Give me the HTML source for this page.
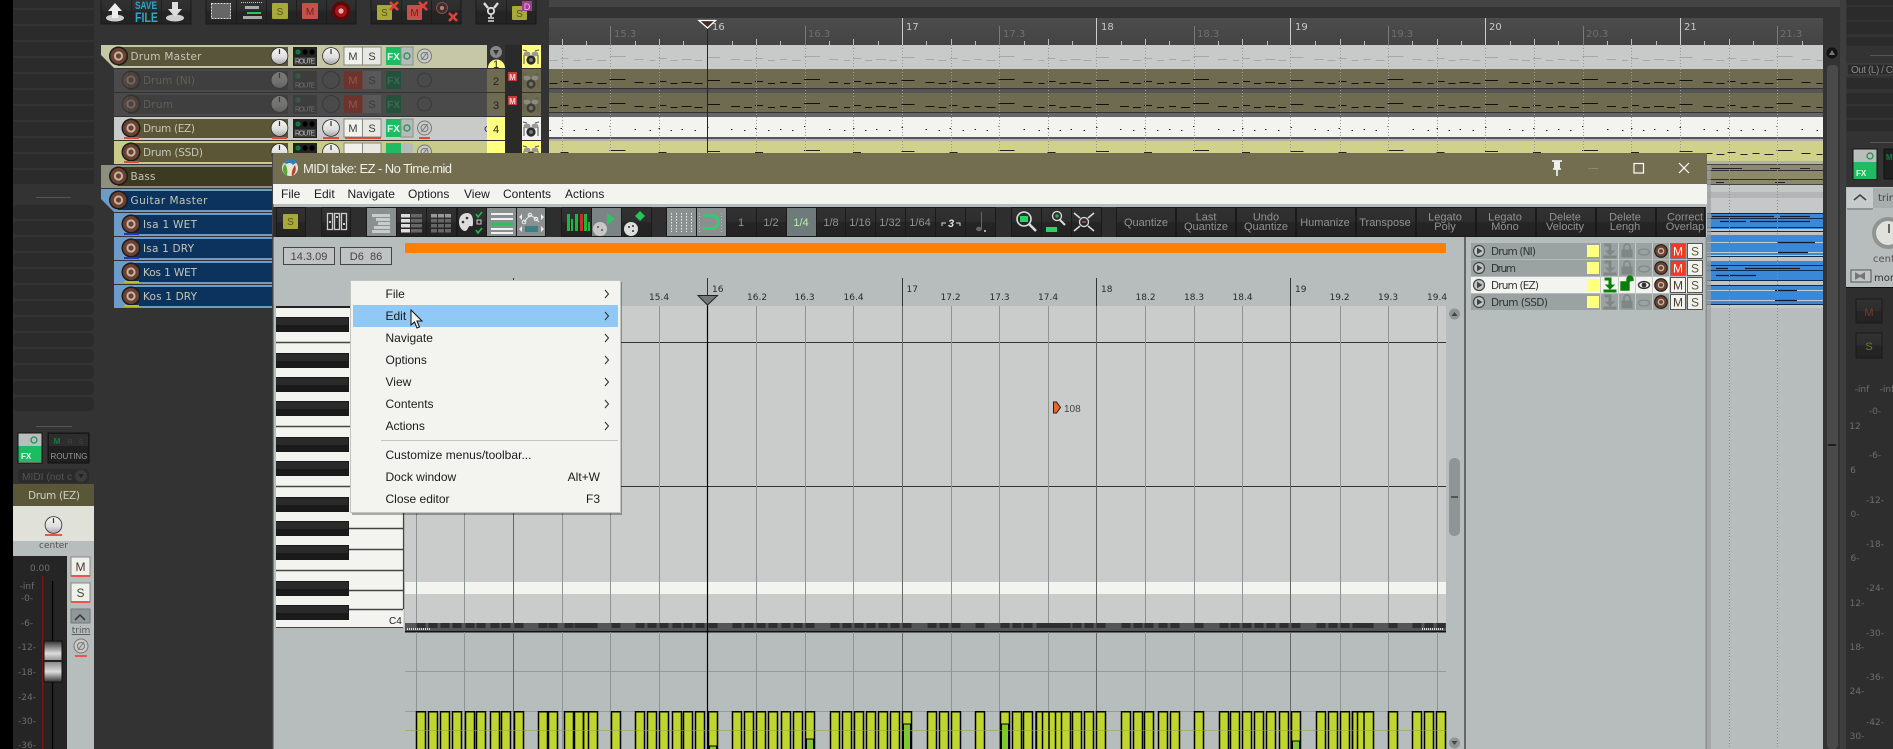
<!DOCTYPE html>
<html><head><meta charset="utf-8"><title>MIDI take</title>
<style>
html,body{margin:0;padding:0;background:#333;width:1893px;height:749px;overflow:hidden}
svg{display:block;position:absolute;left:0;top:0}
text{font-family:"Liberation Sans",sans-serif;white-space:pre}
.d{font-family:"DejaVu Sans",sans-serif}
.n{font-family:"DejaVu Sans",sans-serif;font-size:10.5px;fill:#c6c6b8}
.m{font-size:12px;fill:#1a1a1a}
.t{font-size:11px;fill:#929292;text-anchor:middle}
.r{font-family:"DejaVu Sans",sans-serif;font-size:9px;fill:#2a2a2a}
.s{font-family:"DejaVu Sans",sans-serif;font-size:9px;fill:#6e6e6e;text-anchor:middle}
.ms{font-size:11px;fill:#3a3a3a;text-anchor:middle}
.ro{font-size:7px;fill:#bbb;text-anchor:middle}
</style></head><body>
<svg width="1893" height="749" viewBox="0 0 1893 749" xmlns="http://www.w3.org/2000/svg">
<defs>
<linearGradient id="kg" x1="0" y1="0" x2="0" y2="1"><stop offset="0" stop-color="#f4f4f0"/><stop offset=".6" stop-color="#dedede"/><stop offset="1" stop-color="#a8a8a8"/></linearGradient>
<linearGradient id="bg" x1="0" y1="0" x2="0" y2="1"><stop offset="0" stop-color="#323232"/><stop offset=".5" stop-color="#2d2d2d"/><stop offset=".5" stop-color="#252525"/><stop offset="1" stop-color="#232323"/></linearGradient>
<linearGradient id="rg" x1="0" y1="0" x2="0" y2="1"><stop offset="0" stop-color="#4c4c4c"/><stop offset="1" stop-color="#444"/></linearGradient>
<linearGradient id="fg" x1="0" y1="0" x2="0" y2="1"><stop offset="0" stop-color="#333"/><stop offset=".3" stop-color="#ddd"/><stop offset=".5" stop-color="#888"/><stop offset=".75" stop-color="#ddd"/><stop offset="1" stop-color="#333"/></linearGradient>
<clipPath id="arr"><rect x="549" y="18" width="1274" height="143"/></clipPath>
<clipPath id="cc"><rect x="405" y="623" width="1041" height="5"/></clipPath>
<g id="rec"><circle r="9.5" fill="#1b1b1b"/><circle r="8" fill="#6b4232"/><circle r="4.6" fill="#c9b3a3"/><circle r="2.6" fill="#6b4232"/></g>
<g id="knob"><circle r="8.8" fill="#2a2a2a"/><circle r="8" fill="url(#kg)"/><path d="M0-7V-2" stroke="#333" stroke-width="1.2"/></g>
<g id="phase"><circle r="7" fill="#c9cbc6" stroke="#777"/><circle r="3.5" fill="none" stroke="#777"/><path d="M-3 4L3-4" stroke="#777"/></g>
<g id="drum"><path d="M-8-6l4 1M8-6l-4 1M-7-1V8M7-1V8" stroke="#555" fill="none"/><ellipse cx="-4" cy="-2" rx="3.4" ry="2.4" fill="#999"/><ellipse cx="4" cy="-2" rx="3.4" ry="2.4" fill="#999"/><circle cy="4" r="4.6" fill="#2a2a2a"/><circle cy="4" r="2" fill="#777"/></g>
<path id="P" fill="none" d="M0 0h13M24 2h9M37 3h8M48 1h8M61 3h7M73 2h7M85 3h9M97-1h16M122 2h9M137 3h6M146 1h8M158 3h7M169 2h10M182 3h8"/>
<g id="bars6"><use href="#P" x="512.5"/><use href="#P" x="707"/><use href="#P" x="901.5"/><use href="#P" x="1096"/><use href="#P" x="1290.5"/><use href="#P" x="1485"/><use href="#P" x="1679.5"/></g>
<path id="V" fill="none" d="M421 711V749M433 711V749M445 711V749M457 711V749M470 711V749M481 711V749M495 711V749M506 711V749M519 711V749M543 711V749M553 711V749M569 711V749M579 711V749M588 711V749M593 711V749M616 711V749M640 711V749M652 711V749M664 711V749M677 711V749M688 711V749M700 711V749M713 711V749M737 711V749M749 711V749M761 711V749M773 711V749M786 711V749M798 711V749M810 711V749M835 711V749M847 711V749M859 711V749M871 711V749M883 711V749M895 711V749M907 711V749M932 711V749M944 711V749M956 711V749M980 711V749M1005 711V749M1017 711V749M1028 711V749M1041 711V749M1047 711V749M1054 711V749M1060 711V749M1066 711V749M1077 711V749M1089 711V749M1101 711V749M1126 711V749M1138 711V749M1149 711V749M1163 711V749M1175 711V749M1199 711V749M1224 711V749M1235 711V749M1247 711V749M1259 711V749M1271 711V749M1284 711V749M1296 711V749M1321 711V749M1333 711V749M1345 711V749M1357 711V749M1362 711V749M1369 711V749M1393 711V749M1417 711V749M1429 711V749M1441 711V749"/>
<g id="arrowi"><path d="M-5-7h6v7h3l-4 4-4-4h3v-5h-4z"/><rect x="-6" y="5" width="12" height="2"/></g>
<g id="lock"><rect x="-5" y="-1" width="10" height="7"/><path d="M-3-1v-3a3 3 0 0 1 6 0v3" fill="none" stroke-width="1.6"/></g>
<g id="play"><circle r="5.5" fill="#c0c5c5" stroke="#444" stroke-width="1.2"/><path d="M-2-3.2L3.5 0-2 3.2z" fill="#444"/></g>
</defs>

<rect width="1893" height="749" fill="#333"/>
<rect width="13" height="749" fill="#000"/>

<!-- left slot rows -->
<g fill="#2b2b2b">
<rect x="13" y="0" width="81" height="8"/><rect x="13" y="10" width="81" height="14"/><rect x="13" y="26" width="81" height="14"/><rect x="13" y="42" width="81" height="14"/><rect x="13" y="58" width="81" height="14"/><rect x="13" y="74" width="81" height="14"/><rect x="13" y="90" width="81" height="14"/><rect x="13" y="106" width="81" height="14"/><rect x="13" y="122" width="81" height="14"/><rect x="13" y="138" width="81" height="14"/><rect x="13" y="154" width="81" height="14"/><rect x="13" y="170" width="81" height="14"/>
<rect x="13" y="205" width="81" height="14" rx="5"/><rect x="13" y="221" width="81" height="14" rx="5"/><rect x="13" y="237" width="81" height="14" rx="5"/><rect x="13" y="253" width="81" height="14" rx="5"/><rect x="13" y="269" width="81" height="14" rx="5"/><rect x="13" y="285" width="81" height="14" rx="5"/><rect x="13" y="301" width="81" height="14" rx="5"/><rect x="13" y="317" width="81" height="14" rx="5"/><rect x="13" y="333" width="81" height="14" rx="5"/><rect x="13" y="349" width="81" height="14" rx="5"/><rect x="13" y="365" width="81" height="14" rx="5"/><rect x="13" y="381" width="81" height="14" rx="5"/><rect x="13" y="397" width="81" height="14" rx="5"/>
</g>
<rect x="36" y="197" width="35" height="1" fill="#555"/><rect x="36" y="426" width="36" height="1" fill="#555"/>

<!-- left mixer strip -->
<rect x="18" y="433" width="24" height="30" fill="#b9bebc" stroke="#111"/><rect x="18.5" y="446" width="23" height="16" fill="#1fbb63"/>
<circle cx="34" cy="440" r="3" fill="none" stroke="#1a8a4a" stroke-width="1.2"/>
<text x="21" y="459" font-size="8" font-weight="bold" fill="#e8ffe8">FX</text>
<rect x="48" y="433" width="41" height="30" fill="#1f1f1f" stroke="#111"/><rect x="49" y="434" width="39" height="12" fill="#2d2d2d"/>
<text x="57" y="444" font-size="8" font-weight="bold" fill="#0e7f40" text-anchor="middle">M</text><text x="70" y="444" font-size="7" fill="#444" text-anchor="middle">R</text><text x="81" y="444" font-size="7" fill="#444" text-anchor="middle">S</text>
<text x="69" y="459" class="ro" style="font-size:8px;fill:#999">ROUTING</text>
<rect x="18" y="469" width="71" height="14" rx="4" fill="#2b2b2b"/><text x="22" y="480" font-size="10" fill="#555" textLength="50">MIDI (not c</text><circle cx="81" cy="476" r="6" fill="#3c3c3c"/><path d="M78 474h6l-3 4z" fill="#222"/>
<rect x="13" y="484" width="81" height="22" fill="#5a5738"/><text x="54" y="499" class="d" font-size="10.5" fill="#cfcfc2" text-anchor="middle" textLength="52">Drum (EZ)</text>
<rect x="13" y="506" width="81" height="35" fill="#e0e2da"/><rect x="13" y="541" width="81" height="15" fill="#b7bcbc"/>
<use href="#knob" x="53.5" y="525"/><rect x="45" y="534" width="17" height="2" fill="#e8584a"/>
<text x="53.5" y="548" class="d" font-size="9" fill="#555" text-anchor="middle">center</text>
<rect x="13" y="556" width="54" height="193" fill="#252525"/><rect x="67" y="556" width="27" height="193" fill="#b7bcbc"/>
<text x="40" y="571" class="s">0.00</text>
<text x="27" y="589" class="s">-inf</text><text x="27" y="601" class="s">-0-</text><text x="27" y="626" class="s">-6-</text><text x="27" y="650" class="s">-12-</text><text x="27" y="675" class="s">-18-</text><text x="27" y="700" class="s">-24-</text><text x="27" y="724" class="s">-30-</text><text x="27" y="748" class="s">-36-</text>
<rect x="42" y="576" width="1.5" height="173" fill="#7e1414"/><rect x="52" y="581" width="1.2" height="168" fill="#000"/>
<rect x="44" y="641" width="18" height="41" fill="url(#fg)" stroke="#111"/><rect x="44" y="660" width="18" height="2" fill="#222"/>
<rect x="71" y="557" width="19" height="19" fill="#f0f0ea" stroke="#888"/><text x="80.5" y="571" font-size="12" fill="#4a3a30" text-anchor="middle">M</text><rect x="71" y="575" width="19" height="2" fill="#e8584a"/>
<rect x="71" y="583" width="19" height="19" fill="#f0f0ea" stroke="#888"/><text x="80.5" y="597" font-size="12" fill="#3a4a30" text-anchor="middle">S</text><rect x="71" y="601" width="19" height="2" fill="#e8584a"/>
<rect x="71" y="609" width="19" height="14" fill="#90989a" stroke="#777"/><path d="M75 620l5-5 5 5" fill="none" stroke="#333" stroke-width="1.5"/>
<text x="81" y="633" class="d" font-size="9" fill="#555" text-anchor="middle" text-decoration="underline">trim</text>
<use href="#phase" x="81" y="646"/><rect x="75" y="655" width="12" height="2" fill="#e8584a"/>

<!-- top toolbar -->
<g fill="url(#bg)" stroke="#1a1a1a"><rect x="101" y="-3" width="90" height="27"/><rect x="206" y="-3" width="150" height="27"/><rect x="371" y="-3" width="90" height="27"/><rect x="476" y="-3" width="60" height="27"/></g>
<g stroke="#1e1e1e"><path d="M131.5 0v24M161.5 0v24M236.5 0v24M266.5 0v24M296.5 0v24M326.5 0v24M401.500 0v24M431.5 0v24M506.5 0v24"/></g>
<ellipse cx="115" cy="18" rx="9" ry="3.5" fill="#cfcfcf"/><path d="M115 3l7 8h-4v7h-6v-7h-4z" fill="#eee"/>
<text x="135" y="9" font-size="11" font-weight="bold" fill="#2aa7c9" textLength="22" lengthAdjust="spacingAndGlyphs">SAVE</text>
<text x="135" y="22" font-size="14" font-weight="bold" fill="#2aa7c9" textLength="23" lengthAdjust="spacingAndGlyphs">FILE</text>
<ellipse cx="175" cy="18" rx="9" ry="3.5" fill="#cfcfcf"/><path d="M172 2h6v7h4l-7 8-7-8h4z" fill="#ddd"/>
<rect x="211.5" y="3.5" width="19" height="15" fill="#666" stroke="#ddd" stroke-dasharray="2 1"/>
<path d="M241 2.5h22" stroke="#ccc" stroke-dasharray="1 1"/><rect x="245" y="6" width="14" height="3" fill="#aaa"/><rect x="247" y="12" width="14" height="2" fill="#2ec25c"/><rect x="243" y="16" width="19" height="3" fill="#aaa"/>
<rect x="272" y="3" width="16" height="16" rx="1" fill="#a9a83a"/><text x="280" y="15" font-size="10" fill="#55551e" text-anchor="middle">S</text>
<rect x="302" y="3" width="16" height="16" rx="1" fill="#c4524a"/><text x="310" y="15" font-size="10" fill="#6e1f1a" text-anchor="middle">M</text>
<circle cx="341" cy="11" r="9.5" fill="#5c0808"/><circle cx="341" cy="11" r="6" fill="#a81414"/><circle cx="341" cy="11" r="2.6" fill="#e0b0b0"/>
<rect x="377" y="5" width="15" height="15" rx="1" fill="#a9a83a"/><text x="384.5" y="16" font-size="10" fill="#55551e" text-anchor="middle">S</text>
<path d="M390 2l8 8M398 2l-8 8" stroke="#e0433a" stroke-width="2.6"/>
<rect x="407" y="5" width="15" height="15" rx="1" fill="#c4524a"/><text x="414.5" y="16" font-size="10" fill="#6e1f1a" text-anchor="middle">M</text>
<path d="M419 2l8 8M427 2l-8 8" stroke="#e0433a" stroke-width="2.6"/>
<circle cx="442" cy="8" r="5.5" fill="#4a2a24" stroke="#755"/><circle cx="442" cy="8" r="2" fill="#a88"/>
<path d="M449 13l8 8M457 13l-8 8" stroke="#e0433a" stroke-width="2.6"/>
<circle cx="491" cy="11" r="3.2" fill="none" stroke="#ddd" stroke-width="1.8"/><path d="M484 3l4 5M498 3l-4 5" stroke="#ddd" stroke-width="2.4"/><path d="M491 15v2M488 18h6M488 21h6" stroke="#ddd" stroke-width="1.6"/>
<rect x="512" y="6" width="15" height="14" rx="1" fill="#a9a83a"/><text x="519.5" y="17" font-size="10" fill="#55551e" text-anchor="middle">S</text>
<rect x="522" y="1" width="10" height="10" fill="#a03c96"/><text x="527" y="10" font-size="9" fill="#e8c0e8" text-anchor="middle">D</text>

<!-- track rows -->
<path d="M101 45H487V68H114L101 55z" fill="#c5c7a6"/><rect x="118" y="47" width="170" height="19" fill="#58553a"/>
<rect x="101" y="68" width="386" height="1" fill="#333"/>
<rect x="114" y="69" width="373" height="23" fill="#4a4a4a"/><rect x="128" y="71" width="160" height="19" fill="#3f3f3f"/>
<rect x="114" y="93" width="373" height="23" fill="#4a4a4a"/><rect x="128" y="95" width="160" height="19" fill="#3f3f3f"/>
<rect x="114" y="117" width="373" height="23" fill="#c9cbc8"/><rect x="128" y="119" width="160" height="19" fill="#5a5636"/>
<rect x="114" y="141" width="373" height="23" fill="#c9cb88"/><rect x="128" y="143" width="160" height="19" fill="#5a5636"/>
<path d="M101 165H273V188H101z" fill="#8f8f80"/><rect x="118" y="167" width="155" height="19" fill="#3d3a22"/>
<path d="M101 189H273V212H114L101 199z" fill="#6d9cc9"/><rect x="118" y="191" width="155" height="19" fill="#0b335d"/>
<rect x="114" y="213" width="159" height="23" fill="#6d9cc9"/><rect x="128" y="215" width="145" height="19" fill="#0b335d"/>
<rect x="114" y="237" width="159" height="23" fill="#6d9cc9"/><rect x="128" y="239" width="145" height="19" fill="#0b335d"/>
<rect x="114" y="261" width="159" height="23" fill="#6d9cc9"/><rect x="128" y="263" width="145" height="19" fill="#0b335d"/>
<rect x="114" y="285" width="159" height="23" fill="#6d9cc9"/><rect x="128" y="287" width="145" height="19" fill="#0b335d"/>

<use href="#rec" x="118.5" y="56"/><use href="#rec" x="118.5" y="176"/><use href="#rec" x="118.5" y="200"/>
<g opacity=".35"><use href="#rec" x="131" y="80"/><use href="#rec" x="131" y="104"/></g>
<use href="#rec" x="131" y="128"/><use href="#rec" x="131" y="152"/><use href="#rec" x="131" y="224"/><use href="#rec" x="131" y="248"/><use href="#rec" x="131" y="272"/><use href="#rec" x="131" y="296"/>
<g fill="#e04a3a"><rect x="124" y="137" width="15" height="2"/><rect x="124" y="161" width="15" height="2"/></g>
<rect x="124" y="233" width="15" height="2" fill="#2233cc"/><rect x="124" y="257" width="15" height="2" fill="#2233cc"/><rect x="124" y="281" width="15" height="2" fill="#b8c020"/><rect x="124" y="305" width="15" height="2" fill="#b8c020"/>

<text x="130.5" y="60" class="n" textLength="71">Drum Master</text>
<text x="143" y="84" class="n" style="fill:#5f5f58" textLength="52">Drum (NI)</text>
<text x="143" y="108" class="n" style="fill:#5f5f58" textLength="30">Drum</text>
<text x="143" y="132" class="n" textLength="52">Drum (EZ)</text>
<text x="143" y="156" class="n" textLength="60">Drum (SSD)</text>
<text x="130.5" y="180" class="n" textLength="25">Bass</text>
<text x="130.5" y="204" class="n" textLength="77">Guitar Master</text>
<text x="143" y="228" class="n" textLength="54">Isa 1 WET</text>
<text x="143" y="252" class="n" textLength="51">Isa 1 DRY</text>
<text x="143" y="276" class="n" textLength="54">Kos 1 WET</text>
<text x="143" y="300" class="n" textLength="54">Kos 1 DRY</text>

<!-- row 1 controls -->
<use href="#knob" x="279.5" y="56"/>
<rect x="293" y="47" width="24" height="19" fill="#222"/><circle cx="298" cy="52" r="2.6" fill="#0c7a3c"/><circle cx="305" cy="52" r="2.6" fill="#000"/><circle cx="312" cy="52" r="2.6" fill="#000"/><rect x="294" y="57" width="22" height="8" fill="#3a3a3a"/><text x="305" y="63.5" class="ro" textLength="20">ROUTE</text>
<use href="#knob" x="331" y="56"/>
<rect x="344" y="47" width="18.5" height="18" fill="#f2f2ec" stroke="#888"/><rect x="362.5" y="47" width="18.500" height="18" fill="#e8e8e2" stroke="#888"/><text x="353" y="60" class="ms">M</text><text x="372" y="60" class="ms">S</text>
<rect x="386" y="47" width="15" height="18" fill="#1fbb63"/><text x="393.5" y="60" font-size="10" font-weight="bold" fill="#eafff0" text-anchor="middle">FX</text><rect x="401" y="47" width="12" height="18" fill="#b4bcba" stroke="#8a8f8d"/><circle cx="407" cy="56" r="3" fill="none" stroke="#1a8a4a" stroke-width="1.2"/>
<use href="#phase" x="424.5" y="56"/>
<!-- row 2,3 dim -->
<g opacity=".32"><use href="#knob" x="279.5" y="80"/><use href="#knob" x="279.5" y="104"/><rect x="293" y="71" width="24" height="19" fill="#222"/><rect x="293" y="95" width="24" height="19" fill="#222"/><circle cx="298" cy="76" r="2.6" fill="#0c7a3c"/><circle cx="298" cy="100" r="2.6" fill="#0c7a3c"/><text x="305" y="87.5" class="ro" textLength="20">ROUTE</text><text x="305" y="111.5" class="ro" textLength="20">ROUTE</text></g>
<circle cx="331" cy="80" r="8.5" fill="none" stroke="#383838"/><circle cx="331" cy="104" r="8.5" fill="none" stroke="#383838"/>
<rect x="344" y="71" width="18.5" height="18" fill="#6e332b"/><rect x="362.5" y="71" width="18.5" height="18" fill="#585858"/><rect x="344" y="95" width="18.5" height="18" fill="#6e332b"/><rect x="362.5" y="95" width="18.5" height="18" fill="#585858"/>
<text x="353" y="84" class="ms" style="fill:#8a5a50">M</text><text x="372" y="84" class="ms" style="fill:#3a3a3a">S</text><text x="353" y="108" class="ms" style="fill:#8a5a50">M</text><text x="372" y="108" class="ms" style="fill:#3a3a3a">S</text>
<rect x="386" y="71" width="15" height="18" fill="#24513c"/><rect x="386" y="95" width="15" height="18" fill="#24513c"/><text x="393.5" y="84" font-size="10" font-weight="bold" fill="#3f6a55" text-anchor="middle">FX</text><text x="393.5" y="108" font-size="10" font-weight="bold" fill="#3f6a55" text-anchor="middle">FX</text>
<circle cx="424.5" cy="80" r="7" fill="none" stroke="#3a3a3a"/><circle cx="424.5" cy="104" r="7" fill="none" stroke="#3a3a3a"/>
<!-- row 4 -->
<use href="#knob" x="279.5" y="128"/>
<rect x="293" y="119" width="24" height="19" fill="#222"/><circle cx="298" cy="124" r="2.6" fill="#0c7a3c"/><circle cx="305" cy="124" r="2.6" fill="#000"/><circle cx="312" cy="124" r="2.6" fill="#000"/><rect x="294" y="129" width="22" height="8" fill="#3a3a3a"/><text x="305" y="135.5" class="ro" textLength="20">ROUTE</text>
<use href="#knob" x="331" y="128"/>
<rect x="344" y="119" width="18.5" height="18" fill="#f2f2ec" stroke="#888"/><rect x="362.5" y="119" width="18.5" height="18" fill="#e8e8e2" stroke="#888"/><text x="353" y="132" class="ms">M</text><text x="372" y="132" class="ms">S</text>
<rect x="386" y="119" width="15" height="18" fill="#1fbb63"/><text x="393.5" y="132" font-size="10" font-weight="bold" fill="#eafff0" text-anchor="middle">FX</text><rect x="401" y="119" width="12" height="18" fill="#b4bcba" stroke="#8a8f8d"/><circle cx="407" cy="128" r="3" fill="none" stroke="#1a8a4a" stroke-width="1.2"/>
<use href="#phase" x="424.5" y="128"/>
<g fill="#e04a3a"><rect x="272" y="137" width="15" height="2"/><rect x="323" y="137" width="16" height="2"/><rect x="345" y="137" width="36" height="2"/><rect x="419" y="137" width="11" height="2"/></g>
<circle cx="487.5" cy="129" r="2.5" fill="#ccc" stroke="#333"/>
<!-- row 5 -->
<use href="#knob" x="279.5" y="152"/>
<rect x="293" y="143" width="24" height="19" fill="#222"/><circle cx="298" cy="148" r="2.6" fill="#0c7a3c"/><circle cx="305" cy="148" r="2.6" fill="#000"/><circle cx="312" cy="148" r="2.6" fill="#000"/>
<use href="#knob" x="331" y="152"/>
<rect x="344" y="143" width="18.5" height="18" fill="#f2f2ec" stroke="#888"/><rect x="362.5" y="143" width="18.5" height="18" fill="#e8e8e2" stroke="#888"/>
<rect x="386" y="143" width="15" height="18" fill="#1fbb63"/><rect x="401" y="143" width="12" height="18" fill="#b4bcba"/>
<use href="#phase" x="424.5" y="152"/>

<!-- number col -->
<rect x="487" y="45" width="18" height="23" fill="#333"/><path d="M488 68a8 8 0 0 1 17 0z" fill="#ffff80"/><circle cx="496" cy="52" r="6" fill="#888"/><path d="M493 50h6l-3 5z" fill="#333"/><text x="496" y="68" font-size="11" fill="#222" text-anchor="middle">1</text>
<rect x="487" y="69" width="18" height="23" fill="#6f6b50"/><rect x="487" y="93" width="18" height="23" fill="#6f6b50"/><rect x="487" y="117" width="18" height="23" fill="#ffff80"/><rect x="487" y="141" width="18" height="23" fill="#ffff80"/>
<text x="496" y="85" font-size="11" fill="#222" text-anchor="middle">2</text><text x="496" y="109" font-size="11" fill="#222" text-anchor="middle">3</text><text x="496" y="133" font-size="11" fill="#222" text-anchor="middle">4</text>
<rect x="505" y="45" width="17" height="120" fill="#2a2a2a"/>
<rect x="508" y="72" width="9" height="9" fill="#c43c3c"/><rect x="508" y="96" width="9" height="9" fill="#c43c3c"/><text x="512.5" y="80" font-size="8" font-weight="bold" fill="#f4d4d4" text-anchor="middle">M</text><text x="512.5" y="104" font-size="8" font-weight="bold" fill="#f4d4d4" text-anchor="middle">M</text>
<rect x="522" y="45" width="19" height="23" fill="#ffff80"/><rect x="522" y="69" width="19" height="23" fill="#6f6b50"/><rect x="522" y="93" width="19" height="23" fill="#6f6b50"/><rect x="522" y="117" width="19" height="23" fill="#f3f4ef"/><rect x="522" y="141" width="19" height="23" fill="#ffff80"/>
<use href="#drum" x="531" y="56"/><use href="#drum" x="531" y="128"/><use href="#drum" x="531" y="152"/>
<g opacity=".7"><use href="#drum" x="531" y="80"/><use href="#drum" x="531" y="104"/></g>

<!-- arrange -->
<rect x="549" y="0" width="1291" height="7" fill="#444"/>
<rect x="549" y="18" width="1274" height="27" fill="url(#rg)"/>
<rect x="549" y="45" width="1274" height="24" fill="#c8caca"/>
<rect x="549" y="69" width="1274" height="19" fill="#6f6b50"/><rect x="549" y="88" width="1274" height="1" fill="#333"/><rect x="549" y="89" width="1274" height="4" fill="#555"/>
<rect x="549" y="93" width="1274" height="19" fill="#6f6b50"/><rect x="549" y="112" width="1274" height="1" fill="#333"/><rect x="549" y="113" width="1274" height="4" fill="#666"/>
<rect x="549" y="117" width="1274" height="20" fill="#f3f4ef"/><rect x="549" y="137" width="1274" height="2" fill="#555"/><rect x="549" y="139" width="1274" height="2" fill="#b0b0b0"/>
<rect x="549" y="141" width="1274" height="20" fill="#d0d28c"/>
<g clip-path="url(#arr)">
<use href="#bars6" y="57.5" stroke="#a6a8a8" stroke-width="1"/>
<use href="#bars6" y="80.5" stroke="#111" stroke-width="1"/>
<use href="#bars6" y="104.5" stroke="#111" stroke-width="1"/>
<use href="#bars6" y="127.5" stroke="#222" stroke-width="1" stroke-dasharray="1.5 60"/>
<use href="#bars6" y="151.5" stroke="#222" stroke-width="1"/>
<path d="M562.5 45V161M610.5 45V161M659.5 45V161M756.5 45V161M805.5 45V161M853.5 45V161M951.5 45V161M999.5 45V161M1048.5 45V161M1145.5 45V161M1194.5 45V161M1242.5 45V161M1340.5 45V161M1388.5 45V161M1437.5 45V161M1534.5 45V161M1583.5 45V161M1631.5 45V161M1729.5 45V161M1777.5 45V161M902.5 45V161M1096.5 45V161M1290.5 45V161M1485.5 45V161M1680.5 45V161" stroke="#999" stroke-dasharray="1 2"/>
<path d="M902.5 18V45M1096.5 18V45M1290.5 18V45M1485.5 18V45M1680.5 18V45" stroke="#ccc"/>
<path d="M610.5 26V45M805.5 26V45M999.5 26V45M1194.5 26V45M1388.5 26V45M1583.5 26V45M1777.5 26V45" stroke="#7a7a7a"/>
<path d="M562.5 39V45M659.5 39V45M756.5 39V45M853.5 39V45M951.5 39V45M1048.5 39V45M1145.5 39V45M1242.5 39V45M1340.5 39V45M1437.5 39V45M1534.5 39V45M1631.5 39V45M1729.5 39V45M586.5 41V45M635.5 41V45M683.5 41V45M732.5 41V45M780.5 41V45M829.5 41V45M878.5 41V45M926.5 41V45M975.5 41V45M1024.5 41V45M1072.5 41V45M1121.5 41V45M1169.5 41V45M1218.5 41V45M1267.5 41V45M1315.5 41V45M1364.5 41V45M1412.5 41V45M1461.5 41V45M1510.5 41V45M1558.5 41V45M1607.5 41V45M1656.5 41V45M1704.5 41V45M1753.5 41V45M1802.5 41V45" stroke="#bbb"/>
<path d="M707.5 25V161" stroke="#4e1414"/>
</g>
<path d="M699 20.5h16.5L707.5 28z" fill="#4a2a24" stroke="#fff" stroke-width="1.3"/>
<g font-size="10" fill="#6f6f6f"><text x="614" y="37" class="d">15.3</text><text x="808" y="37" class="d">16.3</text><text x="1003" y="37" class="d">17.3</text><text x="1197" y="37" class="d">18.3</text><text x="1391" y="37" class="d">19.3</text><text x="1586" y="37" class="d">20.3</text><text x="1780" y="37" class="d">21.3</text></g>
<g font-size="10" fill="#c8c8c8"><text x="712" y="30" class="d">16</text><text x="906" y="30" class="d">17</text><text x="1101" y="30" class="d">18</text><text x="1295" y="30" class="d">19</text><text x="1489" y="30" class="d">20</text><text x="1684" y="30" class="d">21</text></g>

<!-- arrange below window at right -->
<rect x="1707" y="161" width="116" height="4" fill="#b0b0a8"/>
<rect x="1707" y="165" width="116" height="20" fill="#8c8a68"/>
<path d="M1707 170.5h116M1707 179.5h116" stroke="#2e2e2e"/><path d="M1707 164.500h116M1707 184.5h116" stroke="#444"/>
<path d="M1712 168.500h30M1770 168.500h10M1800 168.500h10M1716 182.500h8M1775 182.500h10" stroke="#222"/>
<rect x="1707" y="185" width="116" height="28" fill="#c6c8c8"/><rect x="1707" y="192" width="116" height="6" fill="#b3b6b6"/>
<rect x="1707" y="213" width="116" height="92" fill="#3a88d8"/>
<path d="M1707 232h116M1707 258h116M1707 283h116" stroke="#c2c4c4" stroke-width="6"/>
<path d="M1707 213.5h116M1707 218.5h116M1707 227.5h116M1707 231.5h116M1707 256.5h116M1707 265.5h116M1707 270.5h116M1707 280.5h116M1707 285.5h116M1707 304.5h116" stroke="#0b2c55"/>
<path d="M1707 242.5h116M1707 252.5h116M1707 290.5h116M1707 300.5h116" stroke="#c8cacc"/>
<path d="M1712 216.5h62M1780 216.5h30M1720 221.5h26M1750 221.5h60M1777 242.5h38M1778 252.5h30M1716 268.5h12M1745 268.5h55M1716 275.5h40M1775 290.5h22M1775 300.5h22" stroke="#1a1a2a" stroke-width="1.2"/>
<rect x="1707" y="305" width="116" height="444" fill="#b7bcbc"/>
<rect x="1707" y="305" width="116" height="3" fill="#c6c8c8"/>
<path d="M1729.5 161V749M1777.5 161V749" stroke="#888" stroke-dasharray="1 2"/>
<rect x="1707" y="165" width="4" height="584" fill="#9ba0a0" opacity=".7"/>

<!-- vertical scrollbar -->
<rect x="1823" y="45" width="23" height="704" fill="#333"/><rect x="1840" y="0" width="6" height="749" fill="#3e3e3e"/>
<circle cx="1832" cy="53" r="5.5" fill="#111"/><path d="M1829 55l3-5 3 5z" fill="#777"/>
<rect x="1827" y="65" width="11" height="684" rx="4" fill="#4a4a4a"/><rect x="1828" y="444" width="8" height="2" fill="#1e1e1e"/>

<!-- right mixer -->
<g fill="#2b2b2b"><rect x="1847" y="0" width="46" height="5"/><rect x="1847" y="7" width="46" height="13"/><rect x="1847" y="22" width="46" height="12"/><rect x="1847" y="37" width="46" height="9"/><rect x="1847" y="78" width="46" height="11"/><rect x="1847" y="93" width="46" height="11"/><rect x="1847" y="106" width="46" height="12"/><rect x="1847" y="120" width="46" height="11"/></g>
<rect x="1870" y="55" width="23" height="1" fill="#555"/><rect x="1870" y="142" width="23" height="1" fill="#555"/>
<rect x="1847" y="64" width="46" height="11" fill="#2a2a2a" stroke="#444"/><text x="1851" y="73" font-size="10" fill="#888" textLength="42">Out (L) / C</text>
<rect x="1853" y="149" width="24" height="30" fill="#b9bebc" stroke="#111"/><rect x="1853.5" y="162" width="23" height="17" fill="#1fbb63"/><circle cx="1870" cy="156" r="3" fill="none" stroke="#1a8a4a" stroke-width="1.2"/><text x="1856" y="176" font-size="8" font-weight="bold" fill="#e8ffe8">FX</text>
<rect x="1884" y="149" width="12" height="30" fill="#1f1f1f" stroke="#111"/><text x="1886" y="160" font-size="8" font-weight="bold" fill="#0e7f40">M</text>
<rect x="1846" y="187" width="47" height="100" fill="#b7bcbc"/>
<rect x="1847" y="188" width="26" height="20" fill="#c8cbcb"/><path d="M1854 200l6-5 6 5" fill="none" stroke="#444" stroke-width="1.6"/>
<rect x="1873" y="188" width="20" height="20" fill="#a8adad"/><text x="1878" y="201" class="d" font-size="10" fill="#444">trim</text>
<rect x="1847" y="208" width="26" height="2" fill="#8f9494"/>
<circle cx="1888" cy="233" r="16" fill="#8f9492"/><circle cx="1888" cy="233" r="12" fill="#e0e0dc"/><path d="M1889 224v9" stroke="#222" stroke-width="1.3"/>
<text x="1873" y="262" class="d" font-size="10" fill="#555">cent</text>
<rect x="1851" y="270" width="20" height="12" fill="#c2c5c5" stroke="#555"/><path d="M1855 272l5 3 5-3v8l-5-3-5 3z" fill="#777"/><text x="1874" y="281" class="d" font-size="10" fill="#333">mon</text>
<rect x="1846" y="287" width="47" height="1.5" fill="#111"/>
<rect x="1846" y="288" width="47" height="461" fill="#2e2e2e"/>
<rect x="1856" y="299" width="26" height="24" fill="url(#bg)" stroke="#1a1a1a"/><text x="1869" y="316" font-size="11" fill="#7a3a32" text-anchor="middle">M</text>
<rect x="1856" y="333" width="26" height="25" fill="url(#bg)" stroke="#1a1a1a"/><text x="1869" y="350" font-size="11" fill="#76762a" text-anchor="middle">S</text>
<text x="1862" y="392" class="s">-inf</text><text x="1887" y="392" class="s">-inf</text>
<text x="1875" y="414" class="s">-0-</text><text x="1855" y="429" class="s">12</text><text x="1875" y="458" class="s">-6-</text><text x="1853" y="473" class="s">6</text>
<text x="1875" y="503" class="s">-12-</text><text x="1855" y="517" class="s">0-</text><text x="1875" y="547" class="s">-18-</text><text x="1855" y="561" class="s">6-</text>
<text x="1875" y="591" class="s">-24-</text><text x="1857" y="606" class="s">12-</text><text x="1875" y="636" class="s">-30-</text><text x="1857" y="650" class="s">18-</text>
<text x="1875" y="680" class="s">-36-</text><text x="1857" y="694" class="s">24-</text><text x="1875" y="725" class="s">-42-</text><text x="1857" y="739" class="s">30-</text>

<!-- MIDI WINDOW -->
<rect x="272" y="153" width="1435" height="596" fill="#b7bcbc"/>
<rect x="272" y="153" width="1.5" height="596" fill="#444"/>
<rect x="273" y="153" width="1434" height="31" fill="#736e50"/>
<rect x="273" y="184" width="1434" height="20" fill="#f3f4ef"/>
<rect x="273" y="207" width="1433" height="30" fill="#2e2e2e"/>
<!-- logo -->
<circle cx="290" cy="168" r="8" fill="#e8e4d8"/><path d="M284 163a8 8 0 0 1 13-1l-4 3a4 4 0 0 0-6-1z" fill="#2f7fb8"/><path d="M286 175c-4-3-4-8-1-11 2 3 3 7 2 11z" fill="#58a830"/><path d="M292 176c3-2 5-6 3-11-2 3-4 7-3 11z" fill="#b8442e"/>
<text x="303" y="173" font-size="13" fill="#f0f0e8" textLength="149">MIDI take: EZ - No Time.mid</text>
<path d="M1552 161h10M1553 169h8M1557 169v7" stroke="#fff" stroke-width="1.5"/><rect x="1554" y="161" width="6" height="8" fill="#eee"/>
<rect x="1588" y="168" width="10" height="1" fill="#8c886c"/>
<rect x="1634" y="163.5" width="9.5" height="9.5" fill="none" stroke="#fff" stroke-width="1.2"/>
<path d="M1679 163l10 10M1689 163l-10 10" stroke="#fff" stroke-width="1.2"/>
<!-- menu bar -->
<text x="281" y="198" class="m">File</text><text x="314" y="198" class="m">Edit</text><text x="347.5" y="198" class="m">Navigate</text><text x="408" y="198" class="m">Options</text><text x="464" y="198" class="m">View</text><text x="503" y="198" class="m">Contents</text><text x="565" y="198" class="m">Actions</text>
<!-- toolbar groups -->
<g stroke="#1a1a1a" fill="url(#bg)">
<rect x="276.5" y="207.5" width="29" height="29"/><rect x="321.5" y="207.5" width="29" height="29"/>
<rect x="366.5" y="207.5" width="30" height="29" fill="#8a9090"/><rect x="396.5" y="207.5" width="30" height="29"/><rect x="426.5" y="207.5" width="30" height="29"/><rect x="457.5" y="207.5" width="29" height="29"/><rect x="486.5" y="207.5" width="30" height="29" fill="#8a9090"/><rect x="516.5" y="207.5" width="29" height="29" fill="#8a9090"/>
<rect x="561.5" y="207.5" width="30" height="29"/><rect x="591.5" y="207.5" width="30" height="29" fill="#7b8484"/><rect x="621.5" y="207.5" width="30" height="29"/>
<rect x="666.5" y="207.5" width="30" height="29" fill="#8a9090"/><rect x="696.5" y="207.5" width="30" height="29" fill="#8a9090"/>
<rect x="726.5" y="207.5" width="30" height="29"/><rect x="756.5" y="207.5" width="30" height="29"/><rect x="786.5" y="207.5" width="30" height="29" fill="#6f7a7a"/><rect x="816.5" y="207.5" width="29" height="29"/><rect x="845.5" y="207.5" width="30" height="29"/><rect x="875.5" y="207.5" width="30" height="29"/><rect x="905.5" y="207.5" width="30" height="29"/><rect x="935.5" y="207.5" width="30" height="29"/><rect x="965.5" y="207.5" width="30" height="29"/>
<rect x="1011.5" y="207.5" width="30" height="29"/><rect x="1041.5" y="207.5" width="30" height="29"/><rect x="1071.5" y="207.5" width="30" height="29"/>
<rect x="1116.5" y="207.5" width="59" height="29"/><rect x="1176.5" y="207.5" width="59" height="29"/><rect x="1236.5" y="207.5" width="59" height="29"/><rect x="1296.5" y="207.5" width="59" height="29"/><rect x="1356.5" y="207.5" width="59" height="29"/><rect x="1416.5" y="207.5" width="59" height="29"/><rect x="1476.5" y="207.5" width="59" height="29"/><rect x="1536.5" y="207.5" width="59" height="29"/><rect x="1596.5" y="207.5" width="59" height="29"/><rect x="1656.5" y="207.5" width="48" height="29"/>
</g>
<!-- toolbar icons -->
<rect x="283" y="214" width="15" height="15" rx="1" fill="#a9a83a"/><text x="290.5" y="225" font-size="10" fill="#55551e" text-anchor="middle">S</text>
<g fill="none" stroke="#ccc" stroke-width="1.3"><rect x="327.5" y="213.5" width="5" height="16"/><rect x="334.5" y="213.5" width="5" height="16"/><rect x="341.5" y="213.5" width="5" height="16"/></g>
<path d="M329 222h2M336 217h2M343 224h2" stroke="#ccc" stroke-width="2"/>
<g fill="#c9cccc"><rect x="372" y="214" width="18" height="3"/><rect x="376" y="218" width="14" height="3"/><rect x="378" y="222" width="12" height="3"/><rect x="374" y="226" width="16" height="3"/><rect x="372" y="230" width="18" height="3"/></g>
<g fill="#ddd"><rect x="401" y="214" width="9" height="3.5"/><rect x="401" y="219" width="9" height="3.5"/><rect x="401" y="224" width="9" height="3.5"/><rect x="401" y="229" width="9" height="3.5"/></g>
<g fill="#666"><rect x="411" y="214" width="11" height="3.5"/><rect x="411" y="219" width="11" height="3.5"/><rect x="411" y="224" width="11" height="3.5"/><rect x="411" y="229" width="11" height="3.5"/></g>
<g fill="#999"><rect x="431" y="214" width="6" height="3.5"/><rect x="438" y="214" width="6" height="3.5"/><rect x="445" y="214" width="6" height="3.5"/></g>
<g fill="#666"><rect x="431" y="219" width="6" height="3.5"/><rect x="438" y="219" width="6" height="3.5"/><rect x="445" y="219" width="6" height="3.5"/><rect x="431" y="224" width="6" height="3.5"/><rect x="438" y="224" width="6" height="3.5"/><rect x="445" y="224" width="6" height="3.5"/><rect x="431" y="229" width="6" height="3.5"/><rect x="438" y="229" width="6" height="3.5"/><rect x="445" y="229" width="6" height="3.5"/></g>
<path d="M459 222c0-6 4-9 8-9s6 3 6 9-1 4-3 4-2 5-5 5-6-4-6-9z" fill="#ddd"/><circle cx="467" cy="218" r="1.3" fill="#333"/><circle cx="463" cy="222" r="1.3" fill="#333"/>
<path d="M476 214l2 3 4-5M476 230l2 3 4-5" fill="none" stroke="#22b84c" stroke-width="1.6"/><rect x="477" y="220" width="4" height="4" fill="none" stroke="#ccc"/>
<g fill="#f0f0f0"><rect x="491" y="213" width="22" height="2"/><rect x="491" y="218" width="22" height="2"/><rect x="491" y="228" width="22" height="2"/><rect x="491" y="232" width="22" height="2"/></g><rect x="491" y="222.5" width="22" height="3" fill="#27c45c"/>
<path d="M524 222l6-7 5 3 4 4" fill="none" stroke="#eee"/><circle cx="524" cy="222" r="1.8" fill="none" stroke="#eee"/><circle cx="530" cy="215" r="1.8" fill="none" stroke="#eee"/><circle cx="536" cy="219" r="1.8" fill="none" stroke="#eee"/>
<path d="M519 217l3-3v6zM544 217l-3-3v6zM519 229l3-3v6zM544 229l-3-3v6z" fill="#eee"/><rect x="525" y="226" width="13" height="6" fill="#3a7f86"/>
<g fill="#19b83e"><rect x="567" y="214" width="3" height="17"/><rect x="571" y="219" width="2" height="12"/><rect x="575" y="214" width="3" height="17"/><rect x="584" y="214" width="3" height="17"/><rect x="588" y="222" width="2" height="9"/></g><rect x="580" y="214" width="3" height="17" fill="#d02a2a"/>
<path d="M607 213l8 6-8 6z" fill="#2cc464"/><circle cx="600" cy="229" r="7" fill="#c8c8c8"/><circle cx="598" cy="227" r="1" fill="#555"/><circle cx="602" cy="230" r="1" fill="#555"/>
<path d="M640 211l5 5-5 5-5-5z" fill="#22c65a"/><circle cx="631" cy="229" r="7" fill="#ddd"/><circle cx="629" cy="227" r="1" fill="#333"/><circle cx="633" cy="231" r="1" fill="#333"/><circle cx="633" cy="226" r="1" fill="#333"/>
<path d="M671.5 213V232M676.5 213V232M681.5 213V232M686.5 213V232M691.5 213V232" stroke="#eee" stroke-dasharray="1.5 1.5"/>
<path d="M703 215.500h9a6.500 6.500 0 0 1 0 13h-9" fill="none" stroke="#26d36a" stroke-width="2.4"/><path d="M699.5 213V232M721.5 213V232" stroke="#bbb" stroke-dasharray="1 2"/>
<text x="741" y="226" class="t">1</text><text x="771" y="226" class="t">1/2</text><text x="801" y="226" class="t" style="fill:#b8f0b0">1/4</text><text x="831" y="226" class="t">1/8</text><text x="860" y="226" class="t">1/16</text><text x="890" y="226" class="t">1/32</text><text x="920" y="226" class="t">1/64</text>
<path d="M942 226v-3h4M956 223h4v3" fill="none" stroke="#ddd"/><text x="951" y="227" font-size="11" font-weight="bold" font-style="italic" fill="#ddd" text-anchor="middle">3</text>
<path d="M981.5 212V228" stroke="#666"/><ellipse cx="979" cy="229" rx="3" ry="2.2" fill="#666"/><rect x="984" y="230" width="2" height="2" fill="#aaa"/>
<circle cx="1024" cy="219" r="7" fill="none" stroke="#ddd" stroke-width="1.6"/><rect x="1020" y="216" width="8" height="6" fill="#2bd166"/><path d="M1029 224l7 7" stroke="#ddd" stroke-width="2.6"/>
<circle cx="1057" cy="216" r="4.5" fill="none" stroke="#ddd" stroke-width="1.3"/><path d="M1055 216h4M1057 214v4" stroke="#2bd166"/><path d="M1060 220l5 5" stroke="#ddd" stroke-width="2"/><rect x="1046" y="227" width="11" height="5" fill="#2bd166"/>
<circle cx="1084" cy="222" r="4.5" fill="none" stroke="#ddd" stroke-width="1.3"/><path d="M1082 222h4" stroke="#e66"/><path d="M1074 213l6 5M1094 213l-6 5M1074 231l6-5M1094 231l-6-5" stroke="#ddd" stroke-width="1.5"/>
<text x="1146" y="226" class="t">Quantize</text><text x="1206" y="220.5" class="t">Last</text><text x="1206" y="230" class="t">Quantize</text><text x="1266" y="220.5" class="t">Undo</text><text x="1266" y="230" class="t">Quantize</text><text x="1325" y="226" class="t">Humanize</text><text x="1385" y="226" class="t">Transpose</text><text x="1445" y="220.5" class="t">Legato</text><text x="1445" y="230" class="t">Poly</text><text x="1505" y="220.5" class="t">Legato</text><text x="1505" y="230" class="t">Mono</text><text x="1565" y="220.5" class="t">Delete</text><text x="1565" y="230" class="t">Velocity</text><text x="1625" y="220.5" class="t">Delete</text><text x="1625" y="230" class="t">Lengh</text><text x="1685" y="220.5" class="t">Correct</text><text x="1685" y="230" class="t">Overlap</text>

<!-- info -->
<rect x="283.5" y="247.5" width="51" height="17" fill="#bfc3c3" stroke="#444"/><text x="309" y="260" font-size="11" fill="#444" text-anchor="middle">14.3.09</text>
<rect x="340.5" y="247.5" width="51" height="17" fill="#bfc3c3" stroke="#444"/><text x="366" y="260" font-size="11" fill="#444" text-anchor="middle">D6  86</text>
<rect x="405" y="243" width="1041" height="10" fill="#ff8000"/>

<!-- midi ruler labels -->
<path d="M513.5 278V306M707.5 278V306M902.5 278V306M1096.5 278V306M1290.5 278V306" stroke="#333"/>
<g fill="#333"><text x="712" y="292" class="r">16</text><text x="906.5" y="292" class="r">17</text><text x="1101" y="292" class="r">18</text><text x="1295" y="292" class="r">19</text>
<text x="649" y="300" class="r">15.4</text><text x="747" y="300" class="r">16.2</text><text x="794.5" y="300" class="r">16.3</text><text x="843.5" y="300" class="r">16.4</text><text x="940.5" y="300" class="r">17.2</text><text x="989.5" y="300" class="r">17.3</text><text x="1038" y="300" class="r">17.4</text><text x="1135.5" y="300" class="r">18.2</text><text x="1184" y="300" class="r">18.3</text><text x="1232.5" y="300" class="r">18.4</text><text x="1329.5" y="300" class="r">19.2</text><text x="1378" y="300" class="r">19.3</text><text x="1427" y="300" class="r">19.4</text></g>

<!-- grid -->
<rect x="405" y="306" width="1041" height="317" fill="#cacccb"/>
<rect x="405" y="582" width="1041" height="12" fill="#f3f4ef"/>
<rect x="405" y="623" width="1041" height="8" fill="#555"/><rect x="405" y="631" width="1041" height="1.5" fill="#111"/>
<path d="M405 342.5H1446M405 486.5H1446" stroke="#333"/>
<path d="M405 671.5H1446M405 711.5H1446" stroke="#999"/>
<path d="M416.5 306V623M464.5 306V623M562.5 306V623M610.5 306V623M659.5 306V623M756.5 306V623M805.5 306V623M853.5 306V623M951.5 306V623M999.5 306V623M1048.5 306V623M1145.5 306V623M1194.5 306V623M1242.5 306V623M1340.5 306V623M1388.5 306V623M1437.5 306V623M416.5 632V749M464.5 632V749M562.5 632V749M610.5 632V749M659.5 632V749M756.5 632V749M805.5 632V749M853.5 632V749M951.5 632V749M999.5 632V749M1048.5 632V749M1145.5 632V749M1194.5 632V749M1242.5 632V749M1340.5 632V749M1388.5 632V749M1437.5 632V749" stroke="#8e9393"/>
<path d="M513.5 306V623M902.5 306V623M1096.5 306V623M1290.5 306V623M513.5 632V749M902.5 632V749M1096.5 632V749M1290.5 632V749" stroke="#666"/>
<g clip-path="url(#cc)"><g transform="translate(0,-88)"><use href="#V" stroke="#2f2f2f" stroke-width="9"/></g></g>
<path d="M407 629h24M1422 629h22" stroke="#ddd" stroke-width="2" stroke-dasharray="1 1"/>
<use href="#V" stroke="#000" stroke-width="10.5"/>
<use href="#V" y="1.5" stroke="#bfd631" stroke-width="7.5"/>
<path d="M574 711V749M583.500 711V749M588.500 711V749M1036 711V749M1042.500 711V749M1049 711V749M1055.500 711V749M1061.500 711V749M1352.500 711V749M1357.500 711V749M1364 711V749" stroke="#000" stroke-width="1.5"/>
<g fill="#7fc832" stroke="#000"><rect x="709.5" y="746" width="7" height="4"/><rect x="806.5" y="739" width="7" height="11"/><rect x="903.5" y="724" width="7" height="26"/><rect x="1001.5" y="724" width="7" height="26"/><rect x="1292.5" y="741" width="7" height="9"/></g>
<path d="M405 730.5H1446" stroke="#9aa83a" opacity=".55"/>
<path d="M707.5 306V749" stroke="#000" stroke-width="1.2"/>
<path d="M698 295.5h19.5L707.5 305z" fill="#777" stroke="#222"/>
<!-- note -->
<path d="M1053.5 402h3l4 5.5-4 5.5h-3z" fill="#e8672a" stroke="#222"/><text x="1064" y="412" font-size="10" fill="#444">108</text>

<!-- piano -->
<rect x="276" y="306" width="127.5" height="321" fill="#f3f4ef"/>
<rect x="276" y="306" width="127" height="2" fill="#222"/>
<path d="M276 342.5H403M276 426.5H403M276 486.5H403M276 570.5H403M349 528.5H403M349 549.5H403M349 590.5H403M349 609.5H403" stroke="#444" stroke-width="1.5"/>
<path d="M403.5 306V609" stroke="#444" stroke-width="1.2"/><path d="M276 627.5H403" stroke="#444"/>
<g fill="#1a1a1a"><rect x="276" y="317" width="73" height="15"/><rect x="276" y="353" width="73" height="15"/><rect x="276" y="377" width="73" height="15"/><rect x="276" y="401" width="73" height="15"/><rect x="276" y="437" width="73" height="15"/><rect x="276" y="461" width="73" height="15"/><rect x="276" y="497" width="73" height="15"/><rect x="276" y="521" width="73" height="15"/><rect x="276" y="545" width="73" height="15"/><rect x="276" y="581" width="73" height="15"/><rect x="276" y="605" width="73" height="15"/></g>
<g fill="#2a2a2a"><rect x="276" y="318" width="72" height="7"/><rect x="276" y="354" width="72" height="7"/><rect x="276" y="378" width="72" height="7"/><rect x="276" y="402" width="72" height="7"/><rect x="276" y="438" width="72" height="7"/><rect x="276" y="462" width="72" height="7"/><rect x="276" y="498" width="72" height="7"/><rect x="276" y="522" width="72" height="7"/><rect x="276" y="546" width="72" height="7"/><rect x="276" y="582" width="72" height="7"/><rect x="276" y="606" width="72" height="7"/></g>
<text x="389" y="624" font-size="10" fill="#222">C4</text>

<!-- window scrollbar + track panel -->
<circle cx="1454.5" cy="314" r="5.5" fill="#8f9595"/><path d="M1451.5 316l3-4 3 4z" fill="#444"/>
<rect x="1449" y="458" width="11" height="78" rx="5" fill="#8f9595"/><rect x="1451" y="496" width="7" height="2" fill="#555"/>
<circle cx="1454.5" cy="743" r="5.5" fill="#8f9595"/><path d="M1451.5 741l3 4 3-4z" fill="#444"/>
<rect x="1464" y="237" width="2" height="512" fill="#666"/>
<rect x="1705.5" y="237" width="1.5" height="512" fill="#8a8e8e"/>
<g fill="#9aa2a2"><rect x="1471" y="243" width="232" height="16"/><rect x="1471" y="260" width="232" height="16"/><rect x="1471" y="294" width="232" height="16"/></g><rect x="1471" y="277" width="232" height="16" fill="#f3f4ef"/>
<use href="#play" x="1479" y="251"/><use href="#play" x="1479" y="268"/><use href="#play" x="1479" y="285"/><use href="#play" x="1479" y="302"/>
<g font-size="10.5" fill="#333"><text x="1491" y="255" class="d" textLength="45">Drum (NI)</text><text x="1491" y="272" class="d" textLength="25">Drum</text><text x="1491" y="289" class="d" textLength="48">Drum (EZ)</text><text x="1491" y="306" class="d" textLength="57">Drum (SSD)</text></g>
<g fill="#ffff80"><rect x="1587" y="245" width="12" height="12"/><rect x="1587" y="262" width="12" height="12"/><rect x="1587" y="279" width="12" height="12"/><rect x="1587" y="296" width="12" height="12"/></g>
<g stroke="#c6caca"><path d="M1600.5 243V310M1618.5 243V310M1635.5 243V310M1652.5 243V310M1669.5 243V310"/></g>
<g fill="#7f8787" stroke="#7f8787"><use href="#arrowi" x="1610" y="251"/><use href="#arrowi" x="1610" y="268"/><use href="#arrowi" x="1610" y="302"/><use href="#lock" x="1627" y="251"/><use href="#lock" x="1627" y="268"/><use href="#lock" x="1627" y="302"/></g>
<g fill="#087f08" stroke="#087f08"><use href="#arrowi" x="1610" y="285"/><path d="M1621 282h8v8h-8zM1627 282v-3a3 3 0 0 1 6 0v2" fill="#087f08" stroke-width="1.4"/></g>
<g fill="none" stroke="#828a8a" stroke-width="1.3"><ellipse cx="1644" cy="252" rx="5.5" ry="3"/><ellipse cx="1644" cy="269" rx="5.5" ry="3"/><ellipse cx="1644" cy="303" rx="5.5" ry="3"/></g>
<ellipse cx="1644" cy="285" rx="5.5" ry="3.4" fill="none" stroke="#333" stroke-width="1.4"/><circle cx="1644" cy="285" r="2.4" fill="#333"/>
<g transform="translate(1661,251) scale(.72)"><use href="#rec"/></g><g transform="translate(1661,268) scale(.72)"><use href="#rec"/></g><g transform="translate(1661,285) scale(.72)"><use href="#rec"/></g><g transform="translate(1661,302) scale(.72)"><use href="#rec"/></g>
<rect x="1670.5" y="243.5" width="15" height="15" fill="#f03a22" stroke="#777"/><rect x="1670.5" y="260.5" width="15" height="15" fill="#f03a22" stroke="#777"/><rect x="1670.5" y="277.5" width="15" height="15" fill="#f3f3ee" stroke="#555"/><rect x="1670.5" y="294.5" width="15" height="15" fill="#f3f3ee" stroke="#555"/>
<g fill="#f3f3ee" stroke="#555"><rect x="1687.5" y="243.5" width="15" height="15"/><rect x="1687.5" y="260.5" width="15" height="15"/><rect x="1687.5" y="277.5" width="15" height="15"/><rect x="1687.5" y="294.5" width="15" height="15"/></g>
<text x="1678" y="255.5" font-size="12" fill="#fff" text-anchor="middle">M</text><text x="1678" y="272.5" font-size="12" fill="#fff" text-anchor="middle">M</text><text x="1678" y="289.5" font-size="12" fill="#4a3a30" text-anchor="middle">M</text><text x="1678" y="306.5" font-size="12" fill="#4a3a30" text-anchor="middle">M</text>
<text x="1695" y="255.5" font-size="12" fill="#55553a" text-anchor="middle">S</text><text x="1695" y="272.5" font-size="12" fill="#55553a" text-anchor="middle">S</text><text x="1695" y="289.5" font-size="12" fill="#55553a" text-anchor="middle">S</text><text x="1695" y="306.5" font-size="12" fill="#55553a" text-anchor="middle">S</text>

<!-- context menu -->
<rect x="352" y="282" width="270" height="233" fill="#000" opacity=".3"/>
<rect x="350.5" y="280.5" width="270" height="232" fill="#f3f4ef" stroke="#c2c4c0"/>
<rect x="353" y="305" width="265" height="22" fill="#90c8f6"/>
<rect x="381" y="440" width="237" height="1" fill="#c4c6c2"/>
<text x="385.5" y="298" class="m">File</text><text x="385.5" y="320" class="m">Edit</text><text x="385.5" y="342" class="m">Navigate</text><text x="385.5" y="364" class="m">Options</text><text x="385.5" y="386" class="m">View</text><text x="385.5" y="408" class="m">Contents</text><text x="385.5" y="430" class="m">Actions</text>
<text x="385.5" y="459" class="m" textLength="146">Customize menus/toolbar...</text><text x="385.5" y="481" class="m">Dock window</text><text x="385.5" y="503" class="m">Close editor</text>
<text x="600" y="481" class="m" text-anchor="end">Alt+W</text><text x="600" y="503" class="m" text-anchor="end">F3</text>
<path d="M605 290l3.500 4-3.500 4M605 312l3.500 4-3.500 4M605 334l3.500 4-3.500 4M605 356l3.500 4-3.500 4M605 378l3.500 4-3.500 4M605 400l3.500 4-3.500 4M605 422l3.500 4-3.500 4" fill="none" stroke="#333" stroke-width="1.1"/>
<!-- cursor -->
<path d="M411 310v15l3.500-3 2.500 6 2.500-1-2.500-6h5z" fill="#f4f4f4" stroke="#111"/>
</svg>
</body></html>
